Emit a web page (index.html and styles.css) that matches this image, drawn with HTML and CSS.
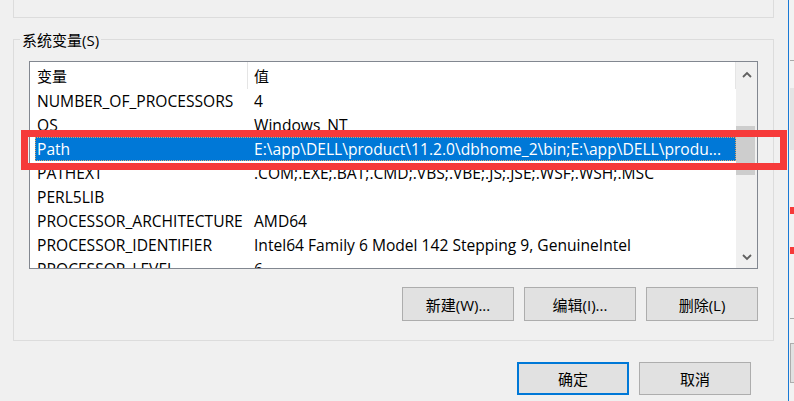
FILE: index.html
```html
<!DOCTYPE html>
<html lang="zh-CN">
<head>
<meta charset="utf-8">
<title>系统变量</title>
<link rel="stylesheet" href="styles.css">
</head>
<body>
<div class="screen">
  <div class="dialog">
    <div class="group-top"></div>
    <div class="group">
      <div class="group-label">系统变量(S)</div>
      <div class="listbox">
        <div class="table">
          <div class="row head"><div class="c1">变量</div><div class="c2">值</div></div>
          <div class="row"><div class="c1">NUMBER_OF_PROCESSORS</div><div class="c2">4</div></div>
          <div class="row"><div class="c1">OS</div><div class="c2">Windows_NT</div></div>
          <div class="row sel"><div class="c1">Path</div><div class="c2">E:\app\DELL\product\11.2.0\dbhome_2\bin;E:\app\DELL\produ...</div></div>
          <div class="row"><div class="c1">PATHEXT</div><div class="c2">.COM;.EXE;.BAT;.CMD;.VBS;.VBE;.JS;.JSE;.WSF;.WSH;.MSC</div></div>
          <div class="row"><div class="c1">PERL5LIB</div><div class="c2"></div></div>
          <div class="row"><div class="c1">PROCESSOR_ARCHITECTURE</div><div class="c2">AMD64</div></div>
          <div class="row"><div class="c1">PROCESSOR_IDENTIFIER</div><div class="c2">Intel64 Family 6 Model 142 Stepping 9, GenuineIntel</div></div>
          <div class="row"><div class="c1">PROCESSOR_LEVEL</div><div class="c2">6</div></div>
        </div>
        <div class="scrollbar">
          <div class="sb-btn up">
            <svg width="10" height="7" viewBox="0 0 10 7"><path d="M1 6 L5 2 L9 6" fill="none" stroke="#606060" stroke-width="1.8"/></svg>
          </div>
          <div class="sb-track"><div class="sb-thumb"></div></div>
          <div class="sb-btn down">
            <svg width="10" height="7" viewBox="0 0 10 7"><path d="M1 1 L5 5 L9 1" fill="none" stroke="#606060" stroke-width="1.8"/></svg>
          </div>
        </div>
      </div>
      <div class="btn-row">
        <button class="btn">新建(W)...</button>
        <button class="btn">编辑(I)...</button>
        <button class="btn">删除(L)</button>
      </div>
    </div>
    <div class="dlg-buttons">
      <button class="btn default">确定</button>
      <button class="btn">取消</button>
    </div>
  </div>
  <div class="edge">
    <div class="edge-line l1"></div>
    <div class="edge-band"></div>
    <div class="edge-mark m1"></div>
    <div class="edge-mark m2"></div>
    <div class="edge-line l2"></div>
    <div class="edge-box"></div>
  </div>
  <div class="callout"></div>
</div>
</body>
</html>
```

FILE: styles.css
```css
html, body {
  margin: 0;
  padding: 0;
}
body {
  background: #f0f0f0;
  font-family: "Open Sans", "Noto Sans CJK SC", sans-serif;
  font-size: 15px;
  color: #000;
}
.screen {
  position: relative;
  display: flex;
  width: 794px;
  height: 401px;
  overflow: hidden;
}
.dialog {
  flex: none;
  width: 788px;
}
.group-top {
  margin-left: 13px;
  width: 761px;
  height: 18px;
  box-sizing: border-box;
  border: 1px solid #dcdcdc;
  border-top: none;
}
.group {
  position: relative;
  margin: 21px 0 0 13px;
  width: 761px;
  box-sizing: border-box;
  border: 1px solid #dcdcdc;
  padding: 21px 15px 19px 15px;
}
.group-label {
  position: absolute;
  top: -10px;
  left: 6px;
  padding: 0 2px;
  line-height: 20px;
  background: #f0f0f0;
}
.listbox {
  display: flex;
  height: 208px;
  box-sizing: border-box;
  border: 1px solid #828790;
  background: #fff;
}
.table {
  flex: 1;
  overflow: hidden;
}
.row {
  display: flex;
  height: 24px;
  line-height: 24px;
  margin-left: 5px;
  white-space: nowrap;
  font-size: 15.6px;
}
.row .c1 {
  flex: none;
  width: 213px;
  box-sizing: border-box;
  padding-left: 2px;
}
.row .c2 {
  flex: 1;
  padding-left: 6px;
  overflow: hidden;
}
.row.head {
  height: 27px;
  line-height: 29px;
  font-size: 15px;
}
.row.head .c1 {
  border-right: 1px solid #e5e5e5;
}
.row.head .c2 {
  border-right: 1px solid #e5e5e5;
}
.row.sel {
  background: #0078d7;
  color: #fff;
  outline: 1px dotted #e0a468;
  outline-offset: -1px;
}
.scrollbar {
  flex: none;
  width: 21px;
  display: flex;
  flex-direction: column;
  background: #f0f0f0;
}
.sb-btn {
  display: flex;
  align-items: center;
  justify-content: center;
}
.sb-btn.up {
  height: 25px;
}
.sb-btn.down {
  height: 22px;
}
.sb-track {
  flex: 1;
}
.sb-thumb {
  margin-top: 39px;
  width: 19px;
  height: 49px;
  background: #cdcdcd;
}
.btn-row {
  display: flex;
  justify-content: flex-end;
  gap: 10px;
  margin-top: 18px;
}
.btn {
  width: 112px;
  height: 34px;
  box-sizing: border-box;
  background: #e1e1e1;
  border: 1px solid #adadad;
  font-family: "Open Sans", "Noto Sans CJK SC", sans-serif;
  font-size: 15px;
  color: #000;
  padding: 0;
  margin: 0;
}
.btn.default {
  border: 2px solid #0078d7;
}
.dlg-buttons {
  display: flex;
  justify-content: flex-end;
  gap: 10px;
  margin-top: 21px;
  padding-right: 37px;
}
.dlg-buttons .btn {
  height: 33px;
}
.edge {
  position: relative;
  flex: 1;
  border-left: 1px solid #1979d4;
  background: #f2f2f2;
}
.edge-line {
  position: absolute;
  left: 1px;
  right: 0;
  height: 1px;
  background: #a8a8a8;
}
.edge-line.l1 { top: 60px; }
.edge-line.l2 { top: 318px; }
.edge-band {
  position: absolute;
  left: 1px;
  right: 0;
  top: 88px;
  height: 62px;
  background: #e4e4e4;
}
.edge-mark {
  position: absolute;
  left: 1px;
  right: 0;
  height: 7px;
  background: #f63a3a;
}
.edge-mark.m1 { top: 207px; }
.edge-mark.m2 { top: 247px; }
.edge-box {
  position: absolute;
  left: 1px;
  right: 0;
  top: 343px;
  height: 40px;
  box-sizing: border-box;
  border: 1px solid #adadad;
  border-right: none;
  background: #e1e1e1;
}
.callout {
  position: absolute;
  left: 21px;
  top: 130px;
  width: 766px;
  height: 40px;
  box-sizing: border-box;
  border: 7px solid #f63a3a;
}
```
